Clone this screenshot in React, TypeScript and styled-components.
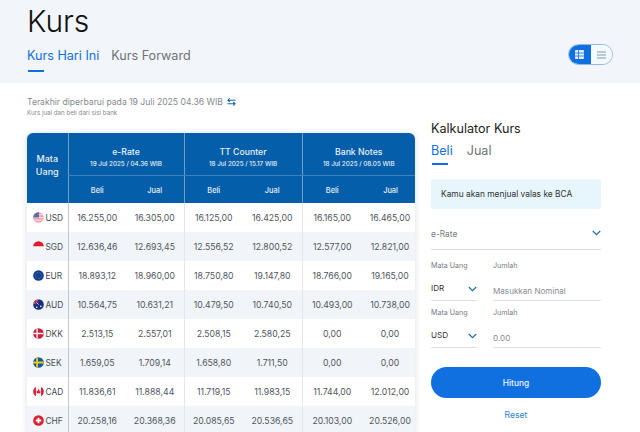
import React from "react";
import styled, { createGlobalStyle } from "styled-components";

const Global = createGlobalStyle`
  html, body { margin: 0; padding: 0; height: 432px; overflow: hidden; background: #fff; }
  body { font-family: Inter, "Noto Sans", sans-serif; color: #333; }
  * { box-sizing: border-box; }
`;

const Page = styled.div`
  width: 640px;
  height: 432px;
  overflow: hidden;
`;
const Header = styled.header`
  height: 83px;
  background: #f2f5f9;
  padding: 0 27px;
  position: relative;
`;
const Title = styled.h1`
  margin: 0;
  padding-top: 3px;
  font-size: 30px;
  line-height: 36px;
  font-weight: 300;
  color: #111;
`;
const TabRow = styled.div<{ $gap: number; $size: number }>`
  display: flex;
  gap: ${(p) => p.$gap}px;
  font-size: ${(p) => p.$size}px;
`;
const MainTabs = styled(TabRow)`
  margin-top: 9px;
`;
const Tab = styled.div<{ $active?: boolean; $pad: number }>`
  position: relative;
  line-height: 16px;
  padding-bottom: ${(p) => p.$pad}px;
  color: ${(p) => (p.$active ? "#1170e0" : "#6e7378")};
  &::after {
    content: "";
    display: ${(p) => (p.$active ? "block" : "none")};
    position: absolute;
    left: 1px;
    bottom: 0;
    width: 16px;
    height: 2px;
    background: #1170e0;
  }
`;
const ViewToggle = styled.div`
  position: absolute;
  left: 568px;
  top: 44px;
  width: 45px;
  height: 21px;
  display: flex;
  border: 1px solid #8db8e8;
  border-radius: 11px;
  overflow: hidden;
  background: #fff;
`;
const ToggleCell = styled.div<{ $on?: boolean }>`
  flex: 1;
  display: flex;
  align-items: center;
  justify-content: center;
  background: ${(p) => (p.$on ? "#1170e0" : "#f6f9fc")};
`;
const Body = styled.main`
  display: flex;
  padding: 13px 0 0 27px;
  gap: 16px;
`;
const Left = styled.section`
  width: 388px;
  flex: none;
`;
const Updated = styled.div`
  display: flex;
  align-items: center;
  gap: 4px;
  font-size: 8.6px;
  line-height: 12px;
  color: #85898e;
`;
const Sub = styled.div`
  font-size: 6.2px;
  line-height: 8px;
  margin-top: 1px;
  color: #85898e;
`;
const TableWrap = styled.div`
  margin-top: 16px;
  border-radius: 6px 6px 0 0;
  overflow: hidden;
  box-shadow: 0 0 6px rgba(60, 80, 110, 0.18);
`;
const Table = styled.table`
  width: 388px;
  table-layout: fixed;
  border-collapse: collapse;
  font-size: 8.7px;
`;
const Th = styled.th<{ $divide?: boolean; $shift?: boolean }>`
  background: #045ea9;
  color: #e8f1f8;
  font-weight: 500;
  padding: 0;
  padding-left: ${(p) => (p.$shift ? "4px" : "0")};
  text-align: center;
  vertical-align: middle;
  font-size: 7.4px;
  border-left: ${(p) => (p.$divide ? "1px solid #6f9fc8" : "none")};
`;
const GroupTh = styled(Th)`
  height: 42px;
  padding-top: 7px;
  border-bottom: 1px solid #3f82bb;
`;
const SubTh = styled(Th)`
  height: 28px;
  padding-top: 2px;
`;
const CornerTh = styled(Th)`
  font-size: 9px;
  line-height: 13px;
  padding-bottom: 6px;
`;
const GroupName = styled.div`
  font-size: 8.7px;
  line-height: 12px;
  font-weight: 500;
`;
const GroupDate = styled.div`
  font-size: 6.3px;
  line-height: 9px;
  margin-top: 2px;
`;
const Row = styled.tr<{ $alt: boolean }>`
  height: 29px;
  background: ${(p) => (p.$alt ? "#f1f5f9" : "#fff")};
`;
const Td = styled.td<{ $divide?: string; $shift?: boolean }>`
  padding: 0;
  padding-left: ${(p) => (p.$shift ? "3px" : "0")};
  text-align: center;
  color: #50565c;
  white-space: nowrap;
  border-left: ${(p) => (p.$divide ? `1px solid ${p.$divide}` : "none")};
`;
const CurrencyCell = styled.div`
  display: flex;
  align-items: center;
  gap: 1.5px;
  padding-left: 6px;
  font-size: 8.4px;
  color: #464c52;
`;
const Side = styled.aside`
  width: 170px;
  flex: none;
  padding-top: 26px;
`;
const SideTitle = styled.h2`
  margin: 0;
  font-size: 12.6px;
  line-height: 14px;
  font-weight: 400;
  color: #222;
`;
const SideTabs = styled(TabRow)`
  margin-top: 7px;
`;
const Alert = styled.div`
  margin-top: 14px;
  height: 30px;
  padding: 0 10px;
  display: flex;
  align-items: center;
  background: #e6f6fc;
  border-radius: 3px;
  font-size: 8.4px;
  color: #333;
`;
const Select = styled.div`
  margin-top: 17px;
  height: 24px;
  display: flex;
  justify-content: space-between;
  align-items: flex-start;
  border-bottom: 1px solid #dcdfe3;
  font-size: 8.4px;
  line-height: 16px;
  color: #777c82;
`;
const Fields = styled.div`
  display: grid;
  grid-template-columns: 46px 1fr;
  column-gap: 16px;
  margin-top: 11px;
  row-gap: 7px;
`;
const Field = styled.div``;
const Label = styled.div`
  font-size: 7.1px;
  line-height: 10px;
  color: #777c82;
`;
const FieldValue = styled.div<{ $muted?: boolean; $raise?: boolean }>`
  height: 26px;
  margin-top: 4px;
  display: flex;
  justify-content: space-between;
  align-items: ${(p) => (p.$raise ? "flex-start" : "flex-end")};
  padding: ${(p) => (p.$raise ? "7px 0 0" : "0 0 3px")};
  border-bottom: 1.5px solid #dcdfe3;
  font-size: 8.1px;
  line-height: 12px;
  color: ${(p) => (p.$muted ? "#888c91" : "#333")};
`;
const Primary = styled.button`
  display: block;
  width: 170px;
  height: 31px;
  margin-top: 19px;
  padding: 0;
  border: none;
  border-radius: 16px;
  background: #1170e0;
  color: #eef5fd;
  font-family: inherit;
  font-size: 8.4px;
  font-weight: 500;
`;
const Reset = styled.div`
  margin-top: 12px;
  text-align: center;
  font-size: 8.6px;
  line-height: 10px;
  color: #2f7fd6;
`;

const Chevron = () => (
  <svg width="9" height="6" viewBox="0 0 9 6" style={{ marginTop: 4 }}>
    <path d="M.8 1 4.5 4.7 8.2 1" fill="none" stroke="#1a6fb5" strokeWidth="1.2" />
  </svg>
);
const Swap = () => (
  <svg width="9" height="8" viewBox="0 0 10 9">
    <path d="M9.5 2.5H1.2M3 .5 1 2.5l2 2M.5 6.5h8.3M7 4.5l2 2-2 2" fill="none" stroke="#1a68ad" strokeWidth="1.2" />
  </svg>
);
const GridIcon = () => (
  <svg width="9" height="9" viewBox="0 0 9 9">
    <rect width="9" height="9" rx="1" fill="#e4eef9" />
    <path d="M0 3h9M0 6h9M3.5 0v9" stroke="#1170e0" strokeWidth=".8" />
  </svg>
);
const ListIcon = () => (
  <svg width="9" height="8" viewBox="0 0 9 8">
    <path d="M0 1h9M0 4h9M0 7h9" stroke="#6fa0b5" strokeWidth="1.2" />
  </svg>
);

const FlagClip = styled.svg`
  flex: none;
  width: 11px;
  height: 11px;
`;
const flags: Record<string, React.ReactNode> = {
  USD: (
    <>
      <rect width="12" height="12" fill="#f3a3ab" />
      <path d="M0 3h12M0 6h12M0 9h12" stroke="#fbe3e5" strokeWidth="1" />
      <rect width="6.5" height="6" fill="#5a6ea8" />
    </>
  ),
  SGD: (
    <>
      <rect width="12" height="6" fill="#e3182f" />
      <rect y="6" width="12" height="6" fill="#f5f5f5" />
    </>
  ),
  EUR: (
    <>
      <rect width="12" height="12" fill="#0c3f96" />
      <circle cx="6" cy="6" r="3.3" fill="none" stroke="#c4b13a" strokeWidth=".7" strokeDasharray=".8 .9" />
    </>
  ),
  AUD: (
    <>
      <rect width="12" height="12" fill="#17307f" />
      <path d="M0 0 6 6M6 0 0 6" stroke="#e8e8ee" strokeWidth="1" />
      <path d="M3 0v6M0 3h6" stroke="#d8202f" strokeWidth="1.2" />
      <circle cx="8.5" cy="8" r=".9" fill="#fff" />
      <circle cx="4" cy="9" r=".9" fill="#fff" />
    </>
  ),
  DKK: (
    <>
      <rect width="12" height="12" fill="#cc1e3a" />
      <path d="M4.5 0v12M0 6h12" stroke="#f4f4f4" strokeWidth="1.5" />
    </>
  ),
  SEK: (
    <>
      <rect width="12" height="12" fill="#0d5aa7" />
      <path d="M4.5 0v12M0 6h12" stroke="#f5c518" strokeWidth="2" />
    </>
  ),
  CAD: (
    <>
      <rect width="12" height="12" fill="#f5f5f5" />
      <rect width="3.2" height="12" fill="#d81e34" />
      <rect x="8.8" width="3.2" height="12" fill="#d81e34" />
      <path d="M6 3 7.4 6l1-.4L7.8 8H4.2l-.6-2.4 1 .4Z" fill="#d81e34" />
    </>
  ),
  CHF: (
    <>
      <rect width="12" height="12" fill="#d9202e" />
      <path d="M6 3v6M3 6h6" stroke="#fff" strokeWidth="2" />
    </>
  ),
};
const Flag = ({ code }: { code: string }) => (
  <FlagClip viewBox="0 0 12 12">
    <defs>
      <clipPath id={`c-${code}`}>
        <circle cx="6" cy="6" r="5.8" />
      </clipPath>
    </defs>
    <g clipPath={`url(#c-${code})`}>{flags[code]}</g>
  </FlagClip>
);

const rows: string[][] = [
  ["USD", "16.255,00", "16.305,00", "16.125,00", "16.425,00", "16.165,00", "16.465,00"],
  ["SGD", "12.636,46", "12.693,45", "12.556,52", "12.800,52", "12.577,00", "12.821,00"],
  ["EUR", "18.893,12", "18.960,00", "18.750,80", "19.147,80", "18.766,00", "19.165,00"],
  ["AUD", "10.564,75", "10.631,21", "10.479,50", "10.740,50", "10.493,00", "10.738,00"],
  ["DKK", "2.513,15", "2.557,01", "2.508,15", "2.580,25", "0,00", "0,00"],
  ["SEK", "1.659,05", "1.709,14", "1.658,80", "1.711,50", "0,00", "0,00"],
  ["CAD", "11.836,61", "11.888,44", "11.719,15", "11.983,15", "11.744,00", "12.012,00"],
  ["CHF", "20.258,16", "20.368,36", "20.085,65", "20.536,65", "20.103,00", "20.526,00"],
];
const groups = [
  ["e-Rate", "19 Jul 2025 / 04.36 WIB"],
  ["TT Counter", "18 Jul 2025 / 15.17 WIB"],
  ["Bank Notes", "18 Jul 2025 / 08.05 WIB"],
];
const colWidths = [41, 58, 58, 59, 59, 60, 53];

export default function App() {
  return (
    <Page>
      <Global />
      <Header>
        <Title>Kurs</Title>
        <MainTabs $gap={12} $size={12.6}>
          <Tab $active $pad={8}>Kurs Hari Ini</Tab>
          <Tab $pad={8}>Kurs Forward</Tab>
        </MainTabs>
        <ViewToggle>
          <ToggleCell $on><GridIcon /></ToggleCell>
          <ToggleCell><ListIcon /></ToggleCell>
        </ViewToggle>
      </Header>
      <Body>
        <Left>
          <Updated>Terakhir diperbarui pada 19 Juli 2025 04.36 WIB <Swap /></Updated>
          <Sub>Kurs jual dan beli dari sisi bank</Sub>
          <TableWrap>
            <Table>
              <colgroup>
                {colWidths.map((w, i) => <col key={i} style={{ width: w }} />)}
              </colgroup>
              <thead>
                <tr>
                  <CornerTh rowSpan={2}>Mata<br />Uang</CornerTh>
                  {groups.map(([name, date]) => (
                    <GroupTh key={name} colSpan={2} $divide>
                      <GroupName>{name}</GroupName>
                      <GroupDate>{date}</GroupDate>
                    </GroupTh>
                  ))}
                </tr>
                <tr>
                  {[0, 1, 2].map((g) => (
                    <React.Fragment key={g}>
                      <SubTh $divide>Beli</SubTh>
                      <SubTh $shift={g === 2}>Jual</SubTh>
                    </React.Fragment>
                  ))}
                </tr>
              </thead>
              <tbody>
                {rows.map(([code, ...vals], i) => (
                  <Row key={code} $alt={i % 2 === 1}>
                    <Td>
                      <CurrencyCell><Flag code={code} />{code}</CurrencyCell>
                    </Td>
                    {vals.map((v, j) => (
                      <Td
                        key={j}
                        $shift={j === 5}
                        $divide={j === 0 ? "#c3c9cf" : j === 2 || j === 4 ? "#e4e8ec" : undefined}
                      >
                        {v}
                      </Td>
                    ))}
                  </Row>
                ))}
              </tbody>
            </Table>
          </TableWrap>
        </Left>
        <Side>
          <SideTitle>Kalkulator Kurs</SideTitle>
          <SideTabs $gap={14} $size={12.6}>
            <Tab $active $pad={6}>Beli</Tab>
            <Tab $pad={6}>Jual</Tab>
          </SideTabs>
          <Alert>Kamu akan menjual valas ke BCA</Alert>
          <Select>e-Rate<Chevron /></Select>
          <Fields>
            <Field>
              <Label>Mata Uang</Label>
              <FieldValue $raise>IDR<Chevron /></FieldValue>
            </Field>
            <Field>
              <Label>Jumlah</Label>
              <FieldValue $muted>Masukkan Nominal</FieldValue>
            </Field>
            <Field>
              <Label>Mata Uang</Label>
              <FieldValue $raise>USD<Chevron /></FieldValue>
            </Field>
            <Field>
              <Label>Jumlah</Label>
              <FieldValue $muted>0.00</FieldValue>
            </Field>
          </Fields>
          <Primary>Hitung</Primary>
          <Reset>Reset</Reset>
        </Side>
      </Body>
    </Page>
  );
}
